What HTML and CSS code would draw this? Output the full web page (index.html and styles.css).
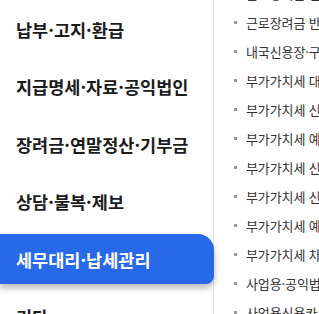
FILE: index.html
```html
<!DOCTYPE html>
<html lang="ko">
<head>
<meta charset="utf-8">
<link rel="stylesheet" href="styles.css">
</head>
<body>
<div class="wrap">
  <nav class="side">
    <ul class="cats">
      <li class="cat">납부·고지·환급</li>
      <li class="cat">지급명세·자료·공익법인</li>
      <li class="cat">장려금·연말정산·기부금</li>
      <li class="cat">상담·불복·제보</li>
      <li class="cat active">세무대리·납세관리</li>
      <li class="cat">기타</li>
    </ul>
  </nav>
  <div class="content">
    <ul class="items">
      <li class="item">근로장려금 신청 안내</li>
      <li class="item">근로장려금 반기 신청</li>
      <li class="item">내국신용장·구매확인서 전자발급</li>
      <li class="item">부가가치세 대리납부 신고</li>
      <li class="item">부가가치세 신고 안내</li>
      <li class="item">부가가치세 예정고지</li>
      <li class="item">부가가치세 신고서 조회</li>
      <li class="item">부가가치세 신고 도움</li>
      <li class="item">부가가치세 예정신고</li>
      <li class="item">부가가치세 차가감 조회</li>
      <li class="item">사업용·공익법인 계좌</li>
      <li class="item">사업용신용카드 등록</li>
    </ul>
  </div>
</div>
</body>
</html>
```
FILE: styles.css
```css
* { box-sizing: border-box; }
html, body { margin: 0; padding: 0; background: #fff; }
body {
  font-family: "Noto Sans CJK KR", "Noto Sans", sans-serif;
  width: 319px;
  height: 314px;
  overflow: hidden;
}
ul { list-style: none; margin: 0; padding: 0; }
.wrap {
  display: flex;
  height: 314px;
  overflow: hidden;
}
.side {
  width: 214px;
  flex: 0 0 214px;
  border-right: 1px solid #e3e3ec;
}
.cats {
  display: flex;
  flex-direction: column;
  gap: 7.5px;
  padding-top: 4px;
}
.cat {
  height: 50px;
  display: flex;
  align-items: center;
  padding-left: 16px;
  font-size: 17.5px;
  font-weight: 700;
  letter-spacing: 0;
  color: #1b1b1b;
  white-space: nowrap;
}
.cat.active {
  background: #2869e9;
  color: #fff;
  border-radius: 0 16px 8px 0;
  box-shadow: 0 4px 7px rgba(0, 0, 0, 0.28);
  margin-right: -1px;
}
.content {
  flex: 1;
  overflow: hidden;
  padding-left: 20px;
}
.items {
  margin-top: -21px;
}
.item {
  height: 29px;
  display: flex;
  align-items: center;
  gap: 9px;
  font-size: 13px;
  letter-spacing: -0.1px;
  color: #333;
  white-space: nowrap;
}
.item::before {
  content: "";
  width: 3px;
  height: 3px;
  background: #999;
  flex: 0 0 3px;
}
```
